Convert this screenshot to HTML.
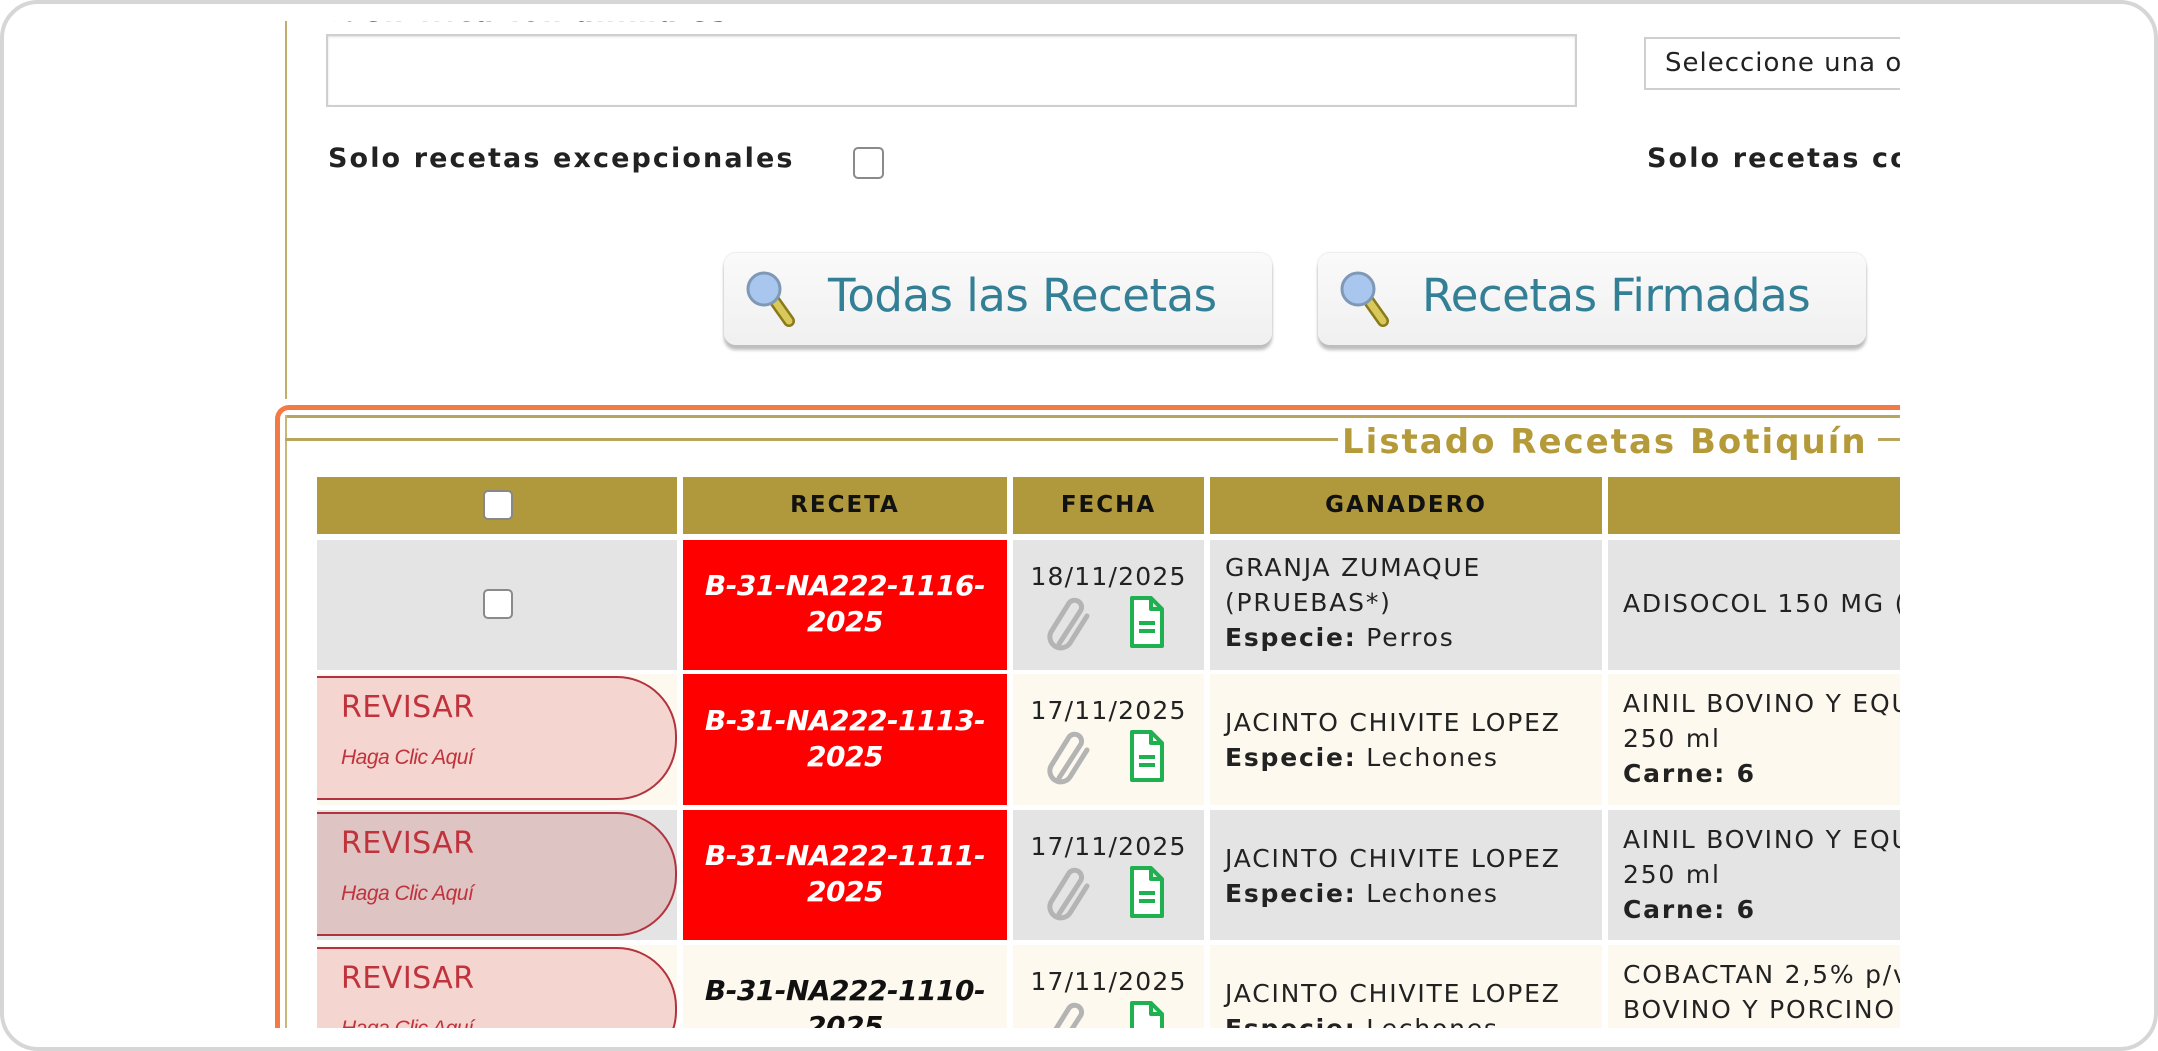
<!DOCTYPE html>
<html><head><meta charset="utf-8">
<style>
*{margin:0;padding:0;box-sizing:border-box}
html,body{width:2158px;height:1051px;overflow:hidden}
body{background:#fff;position:relative;font-family:"DejaVu Sans","Liberation Sans",sans-serif;color:#222}
.frame{position:absolute;left:0;top:0;width:2158px;height:1051px;border:4px solid #d6d6d6;border-radius:38px}
.c{position:absolute;left:275px;top:21px;width:1625px;height:1007px;overflow:hidden;background:#fff}
.a{position:absolute}
.cell{position:absolute;overflow:hidden}
.g{background:#e4e4e4}.cr{background:#fdf9ef}
.red{background:#ff0000;color:#fff;font-weight:bold;font-style:italic;text-align:center;font-size:28px;line-height:36px;letter-spacing:-0.5px;white-space:nowrap}
.hd{background:#b0983c;color:#111;font-weight:bold;font-size:23px;text-align:center;line-height:57px;letter-spacing:2px}
.t{font-size:25px;line-height:35px;padding-left:15px;letter-spacing:1.8px;white-space:nowrap}
.pill{position:absolute;left:0;top:2px;width:360px;height:124px;border:2px solid #b2333f;border-left:none;border-radius:0 60px 60px 0;background:#f5d5cf}
.pill .r{position:absolute;left:24px;top:12px;color:#c0323c;font-size:30px;letter-spacing:0.5px}
.pill .h{position:absolute;left:24px;top:68px;color:#c0323c;font-size:21px;font-style:italic;font-family:"Liberation Sans",sans-serif;letter-spacing:-0.5px}
.btn{position:absolute;height:92px;border-radius:12px;background:linear-gradient(#fafafa,#f0f0f0);box-shadow:0 5px 3px #bdbdbd,0 0 2px #ccc;color:#337f96;font-size:45px;line-height:86px;white-space:nowrap;letter-spacing:-0.5px}
.cb{position:absolute;width:30px;height:30px;border:2px solid #8a8a8a;border-radius:5px;background:#fff}
.d{position:absolute;left:738px;width:191px;text-align:center;font-size:25px;letter-spacing:1.2px}
.lb{position:absolute;font-weight:bold;font-size:27px;line-height:36px;letter-spacing:2.1px;white-space:nowrap}
</style></head><body>
<div class="frame"></div>
<div class="c">
  <div class="a" style="left:10px;top:0;width:2px;height:378px;background:#c2ad6e"></div>
  <div class="lb" style="left:55px;top:-26px">Identification animales</div>
  <div class="a" style="left:51px;top:13px;width:1251px;height:73px;border:2px solid #cfcfcf;box-shadow:inset 0 1px 2px #ddd;background:#fff"></div>
  <div class="lb" style="left:1646px;top:-26px">Uso antibiotico</div>
  <div class="a" style="left:1369px;top:16px;width:300px;height:53px;border:2px solid #cfcfcf;font-size:26px;line-height:49px;padding-left:19px;white-space:nowrap;letter-spacing:1px;background:#fff">Seleccione una opción</div>
  <div class="lb" style="left:53px;top:120px">Solo recetas excepcionales</div>
  <div class="cb" style="left:578px;top:126px;width:31px;height:32px"></div>
  <div class="lb" style="left:1372px;top:120px">Solo recetas con antibiotico</div>

  <div class="btn" style="left:449px;top:232px;width:548px">
    <svg class="a" style="left:18px;top:14px" width="66" height="66" viewBox="0 0 66 66"><line x1="30" y1="30" x2="47" y2="54" stroke="#8a7a1a" stroke-width="12" stroke-linecap="round"/><line x1="30" y1="30" x2="47" y2="54" stroke="#d9c85a" stroke-width="7" stroke-linecap="round"/><circle cx="22" cy="22" r="16" fill="#a9c6ee" stroke="#7f98b6" stroke-width="3"/></svg>
    <span class="a" style="left:104px;top:0">Todas las Recetas</span></div>
  <div class="btn" style="left:1043px;top:232px;width:548px">
    <svg class="a" style="left:18px;top:14px" width="66" height="66" viewBox="0 0 66 66"><line x1="30" y1="30" x2="47" y2="54" stroke="#8a7a1a" stroke-width="12" stroke-linecap="round"/><line x1="30" y1="30" x2="47" y2="54" stroke="#d9c85a" stroke-width="7" stroke-linecap="round"/><circle cx="22" cy="22" r="16" fill="#a9c6ee" stroke="#7f98b6" stroke-width="3"/></svg>
    <span class="a" style="left:104px;top:0">Recetas Firmadas</span></div>

  <div class="a" style="left:0;top:384px;width:1700px;height:700px;border:5px solid #f47a45;border-right:none;border-bottom:none;border-radius:14px 0 0 0"></div>
  <div class="a" style="left:10px;top:394px;width:1700px;height:3px;background:#b9a55e"></div>
  <div class="a" style="left:10px;top:394px;width:2px;height:650px;background:#c9b77a"></div>
  <div class="a" style="left:10px;top:417px;width:1053px;height:3px;background:#b9a55e"></div>
  <div class="a" style="left:1067px;top:399px;font-size:34px;font-weight:bold;color:#b59a3a;line-height:44px;white-space:nowrap;letter-spacing:2px">Listado Recetas Botiquín</div>
  <div class="a" style="left:1603px;top:417px;width:30px;height:3px;background:#b9a55e"></div>

  <div class="cell hd" style="left:42px;top:456px;width:360px;height:57px"><div class="cb" style="left:166px;top:13px;width:30px;height:30px;border-color:#888"></div></div>
  <div class="cell hd" style="left:408px;top:456px;width:324px;height:57px">RECETA</div>
  <div class="cell hd" style="left:738px;top:456px;width:191px;height:57px">FECHA</div>
  <div class="cell hd" style="left:935px;top:456px;width:392px;height:57px">GANADERO</div>
  <div class="cell hd" style="left:1333px;top:456px;width:400px;height:57px"></div>

  <div class="cell g" style="left:42px;top:519px;width:360px;height:130px"><div class="cb" style="left:166px;top:49px"></div></div>
  <div class="cell red" style="left:408px;top:519px;width:324px;height:130px;padding-top:28px">B-31-NA222-1116-<br>2025</div>
  <div class="cell g" style="left:738px;top:519px;width:191px;height:130px"></div>
  <div class="cell g t" style="left:935px;top:519px;width:392px;height:130px;padding-top:10px">GRANJA ZUMAQUE<br>(PRUEBAS*)<br><b>Especie:</b> Perros</div>
  <div class="cell g t" style="left:1333px;top:519px;width:400px;height:130px;padding-top:46px">ADISOCOL 150 MG (</div>

  <div class="cell cr" style="left:42px;top:653px;width:360px;height:131px"><div class="pill"><span class="r">REVISAR</span><span class="h">Haga Clic Aquí</span></div></div>
  <div class="cell red" style="left:408px;top:653px;width:324px;height:131px;padding-top:29px">B-31-NA222-1113-<br>2025</div>
  <div class="cell cr" style="left:738px;top:653px;width:191px;height:131px"></div>
  <div class="cell cr t" style="left:935px;top:653px;width:392px;height:131px;padding-top:31px">JACINTO CHIVITE LOPEZ<br><b>Especie:</b> Lechones</div>
  <div class="cell cr t" style="left:1333px;top:653px;width:400px;height:131px;padding-top:12px">AINIL BOVINO Y EQUINO<br>250 ml<br><b>Carne: 6</b></div>

  <div class="cell g" style="left:42px;top:789px;width:360px;height:130px"><div class="pill" style="background:#dfc4c4"><span class="r">REVISAR</span><span class="h">Haga Clic Aquí</span></div></div>
  <div class="cell red" style="left:408px;top:789px;width:324px;height:130px;padding-top:28px">B-31-NA222-1111-<br>2025</div>
  <div class="cell g" style="left:738px;top:789px;width:191px;height:130px"></div>
  <div class="cell g t" style="left:935px;top:789px;width:392px;height:130px;padding-top:31px">JACINTO CHIVITE LOPEZ<br><b>Especie:</b> Lechones</div>
  <div class="cell g t" style="left:1333px;top:789px;width:400px;height:130px;padding-top:12px">AINIL BOVINO Y EQUINO<br>250 ml<br><b>Carne: 6</b></div>

  <div class="cell cr" style="left:42px;top:924px;width:360px;height:83px"><div class="pill"><span class="r">REVISAR</span><span class="h">Haga Clic Aquí</span></div></div>
  <div class="cell red" style="left:408px;top:924px;width:324px;height:83px;padding-top:28px;color:#111;background:#fdf9ef">B-31-NA222-1110-<br>2025</div>
  <div class="cell cr" style="left:738px;top:924px;width:191px;height:83px"></div>
  <div class="cell cr t" style="left:935px;top:924px;width:392px;height:83px;padding-top:31px">JACINTO CHIVITE LOPEZ<br><b>Especie:</b> Lechones</div>
  <div class="cell cr t" style="left:1333px;top:924px;width:400px;height:83px;padding-top:12px">COBACTAN 2,5% p/v<br>BOVINO Y PORCINO</div>

  <div class="d" style="top:541px">18/11/2025</div>
  <div class="d" style="top:675px">17/11/2025</div>
  <div class="d" style="top:811px">17/11/2025</div>
  <div class="d" style="top:946px">17/11/2025</div>

  <svg class="a" style="left:770px;top:575px" width="50" height="55" viewBox="0 0 50 55"><path d="M14 48 L36 14 A7 7 0 0 0 24 7 L6 36 A11 11 0 0 0 25 47 L42 20" fill="none" stroke="#b4b4b4" stroke-width="5" stroke-linecap="round"/></svg>
  <svg class="a" style="left:854px;top:574px" width="36" height="54" viewBox="0 0 36 54"><path d="M3 3 H22 L33 14 V51 H3 Z M22 3 V14 H33" fill="#fff" stroke="#1fb14f" stroke-width="4" stroke-linejoin="round"/><path d="M10 28 H26 M10 36 H26" stroke="#1fb14f" stroke-width="4"/></svg>

  <svg class="a" style="left:770px;top:709px" width="50" height="55" viewBox="0 0 50 55"><path d="M14 48 L36 14 A7 7 0 0 0 24 7 L6 36 A11 11 0 0 0 25 47 L42 20" fill="none" stroke="#b4b4b4" stroke-width="5" stroke-linecap="round"/></svg>
  <svg class="a" style="left:854px;top:708px" width="36" height="54" viewBox="0 0 36 54"><path d="M3 3 H22 L33 14 V51 H3 Z M22 3 V14 H33" fill="#fff" stroke="#1fb14f" stroke-width="4" stroke-linejoin="round"/><path d="M10 28 H26 M10 36 H26" stroke="#1fb14f" stroke-width="4"/></svg>

  <svg class="a" style="left:770px;top:845px" width="50" height="55" viewBox="0 0 50 55"><path d="M14 48 L36 14 A7 7 0 0 0 24 7 L6 36 A11 11 0 0 0 25 47 L42 20" fill="none" stroke="#b4b4b4" stroke-width="5" stroke-linecap="round"/></svg>
  <svg class="a" style="left:854px;top:844px" width="36" height="54" viewBox="0 0 36 54"><path d="M3 3 H22 L33 14 V51 H3 Z M22 3 V14 H33" fill="#fff" stroke="#1fb14f" stroke-width="4" stroke-linejoin="round"/><path d="M10 28 H26 M10 36 H26" stroke="#1fb14f" stroke-width="4"/></svg>

  <svg class="a" style="left:770px;top:980px" width="50" height="27" viewBox="0 0 50 27"><path d="M14 48 L36 14 A7 7 0 0 0 24 7 L6 36" fill="none" stroke="#b4b4b4" stroke-width="5" stroke-linecap="round"/></svg>
  <svg class="a" style="left:854px;top:979px" width="36" height="28" viewBox="0 0 36 28"><path d="M3 30 V3 H22 L33 14 V30 M22 3 V14 H33" fill="#fff" stroke="#1fb14f" stroke-width="4" stroke-linejoin="round"/></svg>
</div>
</body></html>
